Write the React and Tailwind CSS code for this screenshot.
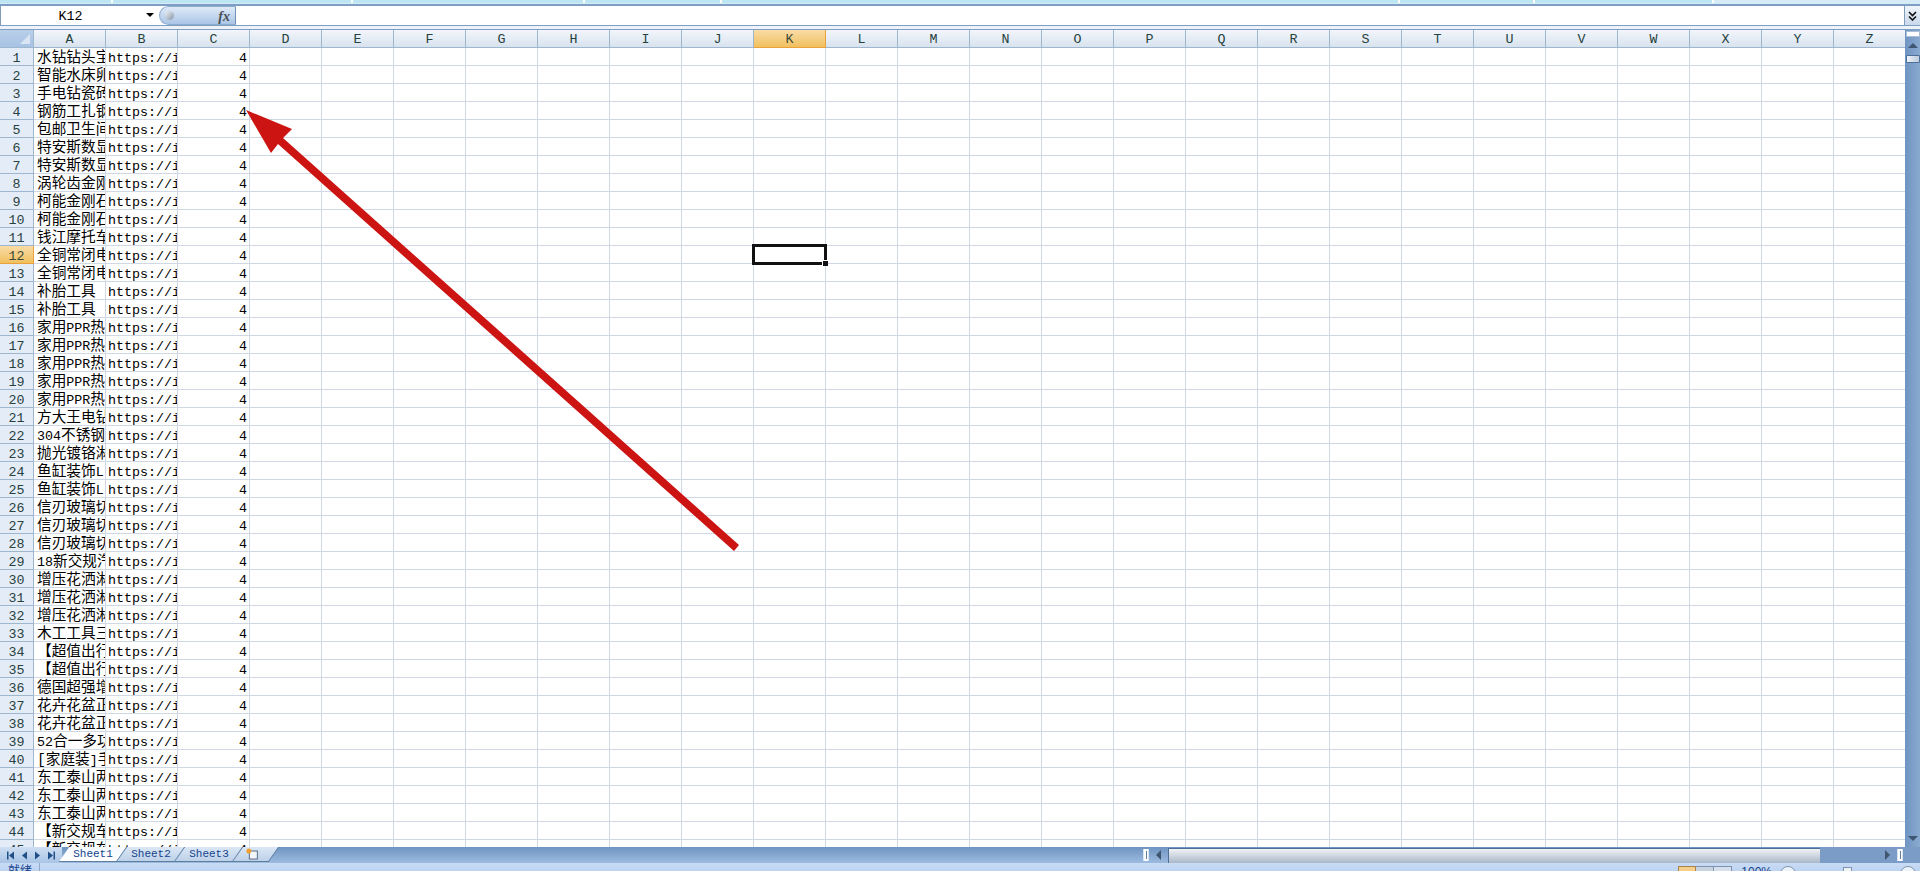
import React from 'react';

const COLUMNS = 'ABCDEFGHIJKLMNOPQRSTUVWXYZ'.split('');

const NAMES = [
  '水钻钻头宝', '智能水床卵', '手电钻瓷砖', '钢筋工扎钢', '包邮卫生间', '特安斯数显', '特安斯数显', '涡轮齿金刚',
  '柯能金刚石', '柯能金刚石', '钱江摩托车', '全铜常闭电', '全铜常闭电', '补胎工具', '补胎工具',
  '家用PPR热', '家用PPR热', '家用PPR热', '家用PPR热', '家用PPR热', '方大王电钻', '304不锈钢',
  '抛光镀铬淋', '鱼缸装饰L', '鱼缸装饰L', '信刃玻璃切', '信刃玻璃切', '信刃玻璃切', '18新交规汽',
  '增压花洒淋', '增压花洒淋', '增压花洒淋', '木工工具三', '【超值出行', '【超值出行', '德国超强增',
  '花卉花盆正', '花卉花盆正', '52合一多功', '[家庭装]手', '东工泰山两', '东工泰山两', '东工泰山两',
  '【新交规车', '【新交规车',
];

const RIBBON_TABS = ['w-[113px]', 'w-[240px]', 'w-[232px]', 'w-[137px]', 'w-[678px]', 'w-[135px]', 'w-[179px]'];

const mono = 'font-["Liberation_Mono","Noto_Sans_CJK_SC",monospace]';

// latin runs are narrower than the CJK ones in the sheet font, so size them apart
function NameText({ text }) {
  const parts = text.split(/([\x21-\x5a\x5c-\x7e]+)/).filter(Boolean);
  return parts.map((part, i) =>
    /^[\x21-\x7e]+$/.test(part) ? (
      <span key={i} className='text-[13.33px]'>{part}</span>
    ) : (
      <span key={i} className='text-[14.67px]'>{part}</span>
    )
  );
}

function ColumnHeader({ name }) {
  const active = name === 'K';
  return (
    <div
      className={`w-[72px] h-full shrink-0 flex items-center justify-center pt-[3px] text-[13.33px] border-r border-b ${
        active
          ? 'bg-gradient-to-b from-[#f9dba4] to-[#f1c05e] border-[#e9a13c] text-[#3b4a3a]'
          : 'bg-gradient-to-b from-[#f3f6fb] to-[#d8e3ee] border-[#9eb6ce] text-[#27413e]'
      }`}
    >
      {name}
    </div>
  );
}

function Row({ index, name }) {
  const active = index === 12;
  return (
    <div className='flex h-[18px] shrink-0'>
      <div
        className={`w-[34px] h-full shrink-0 flex items-center justify-center pt-[4px] text-[13.33px] border-r border-b ${
          active
            ? 'bg-gradient-to-b from-[#f9dba4] to-[#f1c05e] border-[#e9a13c] text-[#3b4a3a]'
            : 'bg-[#e4ecf7] border-[#9eb6ce] text-[#27413e]'
        }`}
      >
        {index}
      </div>
      <div className='w-[72px] h-full shrink-0 border-r border-b border-[#d0d7e5] overflow-hidden whitespace-nowrap pl-[3px] leading-[21px] text-black'>
        <NameText text={name} />
      </div>
      <div className='w-[72px] h-full shrink-0 border-r border-b border-[#d0d7e5] overflow-hidden whitespace-nowrap pl-[2px] text-[13.33px] leading-[22px] text-black'>
        https://i
      </div>
      <div className='w-[72px] h-full shrink-0 border-r border-b border-[#d0d7e5] overflow-hidden pr-[2px] text-right text-[13.33px] leading-[22px] text-black'>
        4
      </div>
      {COLUMNS.slice(3).map((c) => (
        <div key={c} className='relative w-[72px] h-full shrink-0 border-r border-b border-[#d0d7e5]'>
          {active && c === 'K' && (
            <div className='absolute -left-[2px] -top-[2px] w-[75px] h-[21px] border-[3px] border-[#111] z-10'>
              <div className='absolute -right-[4px] -bottom-[4px] w-[6px] h-[6px] bg-[#111] border-l border-t border-white' />
            </div>
          )}
        </div>
      ))}
    </div>
  );
}

// sits over the sheet, coordinates are relative to the sheet's top left
function Arrow() {
  return (
    <svg className='absolute left-0 top-0 z-20 pointer-events-none' width='800' height='600'>
      <polygon points='246,80 292,99 283,108 739,515 734,521 278,114 271,123' fill='#cc1412' />
    </svg>
  );
}

function NameBox() {
  return (
    <div className='flex h-[19px] bg-white'>
      <div className='w-[159px] shrink-0 relative border-l border-[#7f9db9] flex items-center justify-center pt-[3px] pr-[19px] text-[13.33px] text-black'>
        K12
        <span className='absolute left-[145px] top-[7px] w-0 h-0 border-x-[4px] border-x-transparent border-t-[4px] border-t-black' />
      </div>
      <div className='w-[77px] shrink-0 relative rounded-l-[10px] bg-gradient-to-b from-[#dfeaf8] to-[#abc5e6] border border-[#8eacd0] border-r-[#6f90b8]'>
        <span className='absolute left-[5px] top-[4px] w-[9px] h-[9px] rounded-full bg-gradient-to-br from-[#eef2f7] to-[#8b98a8]' />
        <span className='absolute right-[5px] -top-[1px] font-["Liberation_Serif",serif] italic font-bold text-[14px] text-[#4a4f55]'>
          fx
        </span>
      </div>
      <div className='flex-1' />
      <div className='w-[16px] shrink-0 bg-gradient-to-b from-[#f0f5fb] to-[#c9d9ec] border-l border-[#7f9db9] flex flex-col items-center justify-center'>
        <svg width='9' height='10' viewBox='0 0 9 10'>
          <path d='M1 1l3.5 3.5L8 1M1 5.5L4.5 9 8 5.5' fill='none' stroke='#111' strokeWidth='1.6' />
        </svg>
      </div>
    </div>
  );
}

function SheetTab({ label, active }) {
  return (
    <div
      className={`w-[58px] h-[15px] shrink-0 flex items-center justify-center text-[11px] text-[#15428b] border-b border-r border-[#5f7f9f] -skew-x-[35deg] ${
        active ? 'bg-gradient-to-b from-[#f5f9fe] to-white' : 'bg-gradient-to-b from-[#dbe7f5] to-[#bdd1e9]'
      }`}
    >
      <span className='skew-x-[35deg]'>{label}</span>
    </div>
  );
}

function NavTriangle({ left, bar }) {
  return (
    <svg width='8' height='9' viewBox='0 0 8 9' className='shrink-0'>
      {left ? <path d='M7 0.5v8L2 4.5z' fill='#1f4f86' /> : <path d='M1 0.5v8l5-4z' fill='#1f4f86' />}
      {bar && <rect x={left ? 0 : 6.5} y='0.5' width='1.5' height='8' fill='#1f4f86' />}
    </svg>
  );
}

function SplitHandle() {
  return (
    <div className='w-[6px] h-[12px] shrink-0 bg-white border-x border-[#d7e4f3] flex items-center justify-center'>
      <span className='w-px h-[8px] bg-[#5f7f9f]' />
    </div>
  );
}

export default function App() {
  return (
    <div className={`w-[1920px] h-[871px] overflow-hidden flex flex-col bg-white ${mono}`}>
      {/* Ribbon remainder */}
      <div className='h-[6px] shrink-0 bg-[#d5ecf8] border-b-2 border-[#7e9fc3] flex'>
        {RIBBON_TABS.map((w, i) => (
          <div key={i} className={`${w} h-[3px] shrink-0 bg-[#bce6f2] border-r-2 border-white`} />
        ))}
      </div>

      {/* Formula bar */}
      <div className='shrink-0'>
        <NameBox />
        <div className='h-[5px] bg-[#eef3fa] border-y border-[#7e9fc3]' />
      </div>

      {/* Sheet and vertical scrollbar */}
      <div className='flex-1 flex min-h-0'>
        <div className='relative flex-1 min-w-0 flex flex-col overflow-hidden'>
          <div className='flex h-[18px] shrink-0'>
            <div className='relative w-[34px] h-full shrink-0 bg-gradient-to-b from-[#b9cfe9] to-[#a7c3e3] border-r border-b border-[#9eb6ce]'>
              <span className='absolute right-[3px] bottom-[3px] w-0 h-0 border-l-[10px] border-l-transparent border-b-[10px] border-b-[#d9e5f3]' />
            </div>
            {COLUMNS.map((c) => (
              <ColumnHeader key={c} name={c} />
            ))}
          </div>
          {NAMES.map((name, i) => (
            <Row key={i} index={i + 1} name={name} />
          ))}
          <Arrow />
        </div>

        <div className='w-[15px] shrink-0 flex flex-col items-center bg-gradient-to-r from-[#6f94c2] to-[#8aaad0]'>
          <div className='w-[14px] h-[6px] mt-[1px] bg-white border border-[#a9bfd9]' />
          <div className='mt-[6px] w-0 h-0 border-x-[5px] border-x-transparent border-b-[5px] border-b-[#3f5570]' />
          <div className='mt-[7px] w-[14px] h-[8px] rounded-[1px] bg-gradient-to-r from-[#eef3f9] to-[#bccbdd] border border-[#4e6f99]' />
          <div className='flex-1' />
          <div className='mb-[6px] w-0 h-0 border-x-[5px] border-x-transparent border-t-[5px] border-t-[#3f5570]' />
        </div>
      </div>

      {/* Sheet tabs and horizontal scrollbar */}
      <div className='h-[16px] shrink-0 flex items-center bg-gradient-to-b from-[#6f94c2] to-[#9dbbdf] overflow-hidden'>
        <div className='w-[62px] h-full shrink-0 flex items-center justify-around px-[4px] bg-gradient-to-b from-[#cfdff2] to-[#a9c4e5]'>
          <NavTriangle left bar />
          <NavTriangle left />
          <NavTriangle />
          <NavTriangle bar />
        </div>
        <div className='w-[1081px] h-full shrink-0 flex items-start pl-[2px] gap-0'>
          <SheetTab label='Sheet1' active />
          <SheetTab label='Sheet2' />
          <SheetTab label='Sheet3' />
          <div className='w-[36px] h-[15px] shrink-0 flex items-center justify-center pr-[8px] bg-gradient-to-b from-[#dbe7f5] to-[#bdd1e9] border-b border-r border-[#5f7f9f] -skew-x-[35deg]'>
            <svg width='14' height='12' viewBox='0 0 14 12' className='skew-x-[35deg]'>
              <rect x='4' y='3' width='8' height='8' fill='#f3f6fa' stroke='#5a6d85' />
              <circle cx='3.5' cy='3' r='2.5' fill='#f0a02c' />
            </svg>
          </div>
        </div>
        <SplitHandle />
        <div className='w-[19px] shrink-0 flex justify-center'>
          <span className='w-0 h-0 border-y-[5px] border-y-transparent border-r-[5px] border-r-[#3f5570]' />
        </div>
        <div className='w-[652px] h-[15px] shrink-0 bg-gradient-to-b from-[#f1f3f6] to-[#aab8c9] border-l border-t border-[#4e6f99]' />
        <div className='flex-1 flex items-center justify-end pr-[17px] gap-[7px] bg-[#7a9cc6] h-full'>
          <span className='w-0 h-0 border-y-[5px] border-y-transparent border-l-[5px] border-l-[#3f5570]' />
          <SplitHandle />
        </div>
      </div>

      {/* Status bar, cut off by the window edge */}
      <div className='h-[8px] shrink-0 relative overflow-hidden flex bg-gradient-to-b from-[#c9dcf6] to-[#bdd3f1] text-[12px] text-[#15428b] font-["Liberation_Sans","Noto_Sans_CJK_SC",sans-serif]'>
        <div className='w-[40px] h-full shrink-0 border-r border-[#8fa9c9] pl-[8px] leading-[16px]'>就绪</div>
        <div className='flex-1' />
        <div className='flex items-start h-[20px] pt-[3px] pr-[4px]'>
          <div className='w-[18px] h-[16px] shrink-0 bg-[#f8cf8a] border border-[#a6844f]' />
          <div className='w-[18px] h-[16px] shrink-0 bg-[#c9d4e3] border-y border-r border-[#7e93ad]' />
          <div className='w-[18px] h-[16px] shrink-0 bg-[#d7e1ee] border-y border-r border-[#7e93ad]' />
          <span className='w-[40px] shrink-0 text-right leading-[12px]'>100%</span>
          <span className='w-[16px] h-[16px] shrink-0 ml-[8px] rounded-full border border-[#7e93ad] bg-[#eef3fa]' />
          <span className='w-[9px] h-[9px] shrink-0 ml-[47px] mt-px bg-[#eef3fa] border border-[#7e93ad]' />
          <span className='w-[16px] h-[16px] shrink-0 ml-[48px] rounded-full border border-[#7e93ad] bg-[#eef3fa]' />
        </div>
      </div>
    </div>
  );
}
